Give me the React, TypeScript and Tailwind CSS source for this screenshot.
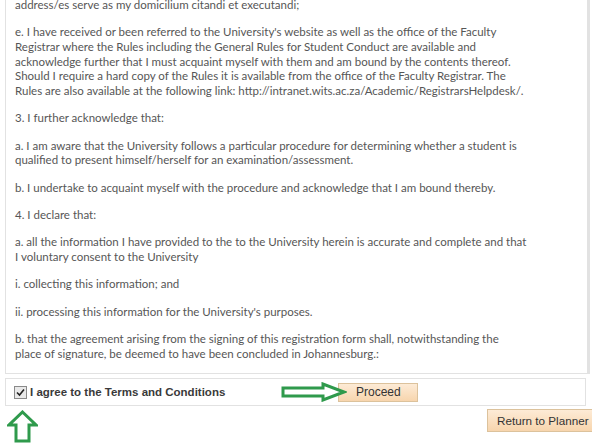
import React from "react";

const paragraphs: string[][] = [
  ["address/es serve as my domicilium citandi et executandi;"],
  [
    "e. I have received or been referred to the University's website as well as the office of the Faculty",
    "Registrar where the Rules including the General Rules for Student Conduct are available and",
    "acknowledge further that I must acquaint myself with them and am bound by the contents thereof.",
    "Should I require a hard copy of the Rules it is available from the office of the Faculty Registrar. The",
    "Rules are also available at the following link: http://intranet.wits.ac.za/Academic/RegistrarsHelpdesk/.",
  ],
  ["3. I further acknowledge that:"],
  [
    "a. I am aware that the University follows a particular procedure for determining whether a student is",
    "qualified to present himself/herself for an examination/assessment.",
  ],
  ["b. I undertake to acquaint myself with the procedure and acknowledge that I am bound thereby."],
  ["4. I declare that:"],
  [
    "a. all the information I have provided to the to the University herein is accurate and complete and that",
    "I voluntary consent to the University",
  ],
  ["i. collecting this information; and"],
  ["ii. processing this information for the University's purposes."],
  [
    "b. that the agreement arising from the signing of this registration form shall, notwithstanding the",
    "place of signature, be deemed to have been concluded in Johannesburg.:",
  ],
];

const ArrowRight = () => (
  <svg width="66" height="20" viewBox="0 0 66 20" className="relative z-10 -mr-[9px]">
    <polygon
      points="2,6 42,6 42,2 63,10 42,18 42,14 2,14"
      fill="white"
      stroke="#2f9a4c"
      strokeWidth="3"
      strokeLinejoin="miter"
    />
  </svg>
);

const ArrowUp = () => (
  <svg width="31" height="33" viewBox="0 0 31 33">
    <polygon
      points="15.5,2 29,15 22,15 22,31 9,31 9,15 2,15"
      fill="white"
      stroke="#2f9a4c"
      strokeWidth="3"
    />
  </svg>
);

export default function App() {
  return (
    <div className="w-[592px] h-[445px] overflow-hidden bg-white font-['Lato',sans-serif]">
      <div className="ml-[5px] w-[585px] h-[374px] border-l border-b border-r-[3px] border-[#e2e2e2] overflow-hidden pl-[9px]">
        <div className="-mt-[2px] text-[11.5px] leading-[14.7px] text-[#565656] whitespace-nowrap">
          {paragraphs.map((p, i) => (
            <div key={i} className="mb-[12.6px]">
              {p.map((line, j) => (
                <div key={j}>{line}</div>
              ))}
            </div>
          ))}
        </div>
      </div>

      <div className="mt-[4px] ml-[5px] w-[581px] h-[28px] border border-[#e2e2e2] flex items-center pl-[8px]">
        <span className="mt-[1px] w-[13px] h-[13px] border border-[#8a8a8a] bg-[#e9e9e9] flex items-center justify-center">
          <svg width="9" height="9" viewBox="0 0 9 9">
            <path d="M1 4.5 L3.5 7 L8 1.5" fill="none" stroke="#222" strokeWidth="1.6" />
          </svg>
        </span>
        <span className="ml-[3px] mt-[1px] font-['Liberation_Sans',sans-serif] font-bold text-[11.5px] text-[#3a3a3a]">
          I agree to the Terms and Conditions
        </span>
        <div className="ml-[56px] flex items-center">
          <ArrowRight />
          <button className="w-[80px] h-[19px] border border-[#dcc29c] bg-gradient-to-b from-[#fdebd6] to-[#f7d5ad] font-['Liberation_Sans',sans-serif] text-[12px] text-[#333] flex items-center justify-center">
            Proceed
          </button>
        </div>
      </div>

      <div className="flex justify-between items-start">
        <div className="ml-[7px] mt-[4px]">
          <ArrowUp />
        </div>
        <button className="mt-[3px] w-[107px] h-[23px] -mr-[2px] border border-[#dcc29c] bg-gradient-to-b from-[#fdebd6] to-[#f7d5ad] font-['Liberation_Sans',sans-serif] text-[11.7px] text-[#333] whitespace-nowrap flex items-center pl-[9px]">
          Return to Planner
        </button>
      </div>
    </div>
  );
}
